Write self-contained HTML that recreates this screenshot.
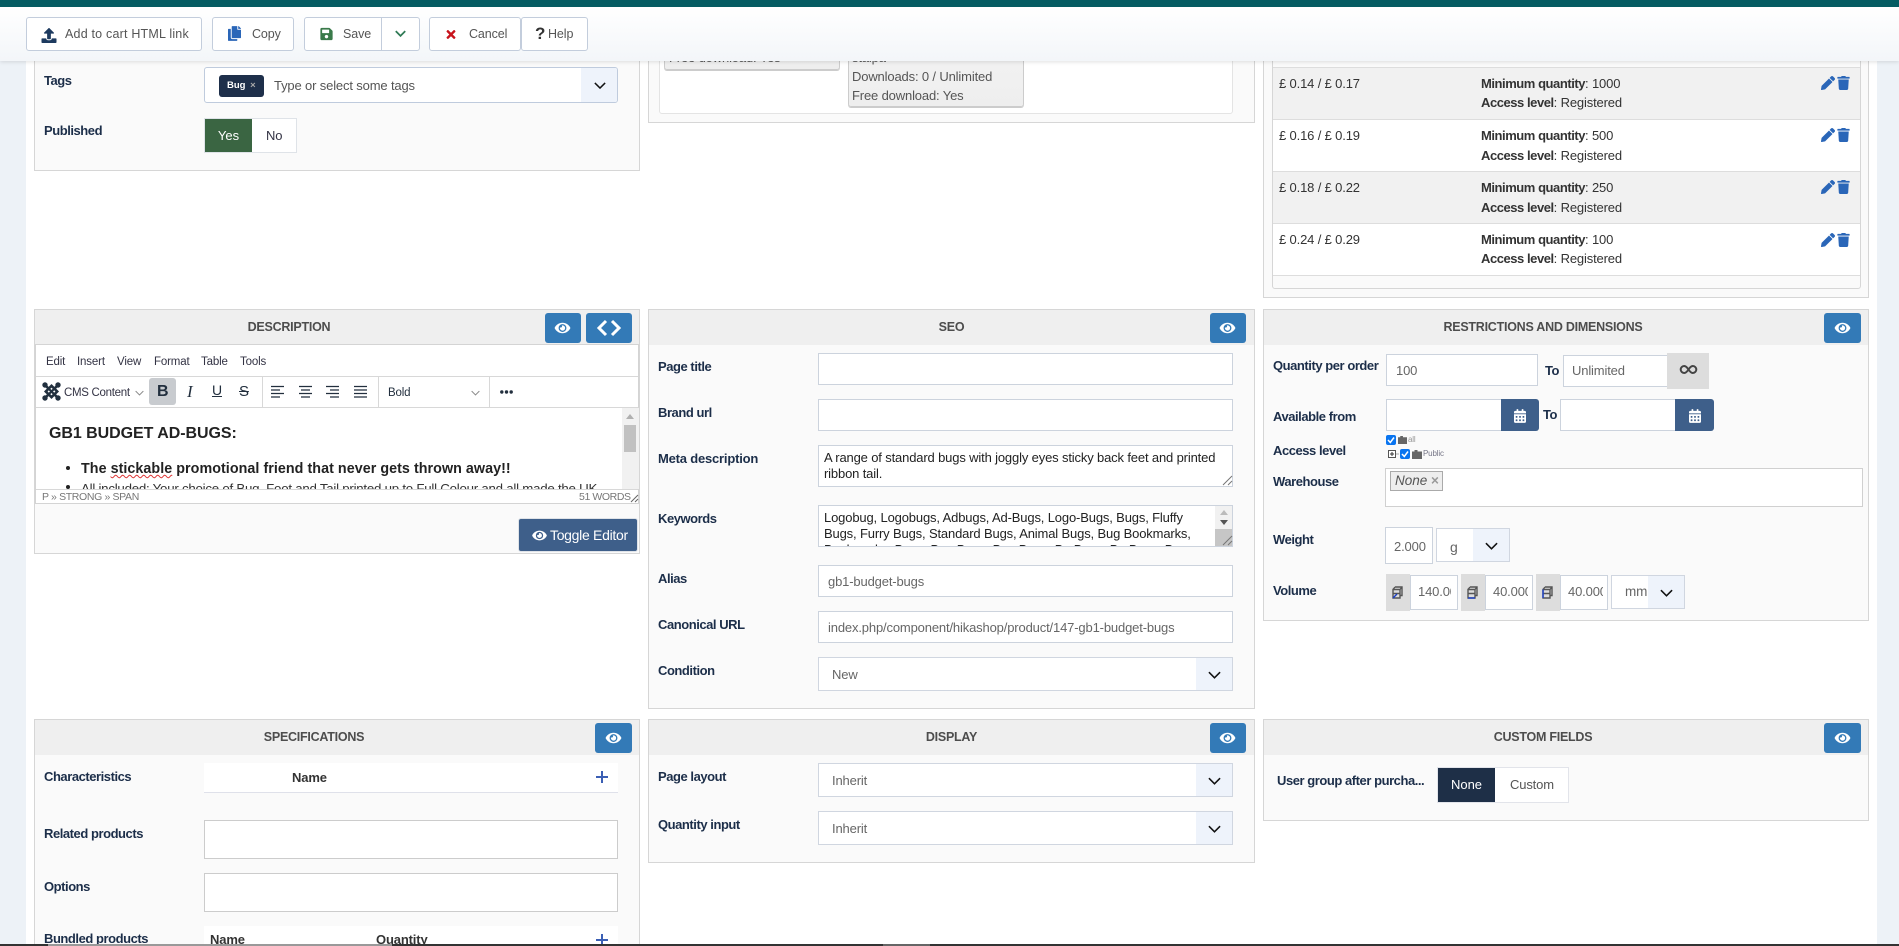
<!DOCTYPE html>
<html lang="en"><head><meta charset="utf-8"><title>Product edit</title>
<style>
html,body{margin:0;padding:0;width:1899px;height:946px;overflow:hidden;background:#fff}
body{position:relative;font-family:"Liberation Sans",Arial,sans-serif;font-size:13px;color:#333}
div,span.a{box-sizing:border-box}
.a,.t,.l,.i,.p,.h,.b,.s,.e{position:absolute}
.t,.l{white-space:nowrap;line-height:20px;height:20px;letter-spacing:-.15px}
.l{font-weight:700;color:#1c2e49;letter-spacing:-.45px}
.t b{letter-spacing:-.45px}
.i{background:#fff;border:1px solid #ccd3dd}
.p{background:#fafafa;border:1px solid #d6d6d6}
.h{background:#efefef;height:35px;text-align:center;font-weight:700;font-size:12.5px;color:#4d4d4d;line-height:34px;left:0;right:0;top:0;letter-spacing:-.25px}
.b{background:#fff;border:1px solid #c3cddc;border-radius:3px;height:34px;top:17px;line-height:32px;color:#555;font-size:12.5px;white-space:nowrap;letter-spacing:-.1px}
.e{background:#337ab7;border-radius:3px;height:30px;width:37px}
.e svg{position:absolute;left:10px;top:8px;width:17px;height:14px;fill:#fff}
.s{background:#fff;border:1px solid #d0d6e0}
.s i{position:absolute;right:0;top:0;bottom:0;background:#eef3fb}
.s svg{position:absolute;fill:none;stroke:#111;stroke-width:1.6}
.g{color:#666}
svg.a{overflow:visible}
.r{left:1px;right:1px;height:52px;border-top:1px solid #ddd}
.tile{background:linear-gradient(#f3f3f3,#eee);border:1px solid #ccc;border-radius:3px;box-shadow:0 1px 0 #ccc}
</style></head><body>
<svg width="0" height="0" style="position:absolute"><defs>
<symbol id="eye" viewBox="0 0 576 512"><path d="M572.52 241.4C518.29 135.59 410.93 64 288 64S57.68 135.64 3.48 241.41a32.35 32.35 0 0 0 0 29.19C57.71 376.41 165.07 448 288 448s230.32-71.64 284.52-177.41a32.35 32.35 0 0 0 0-29.19zM288 400a144 144 0 1 1 144-144 143.93 143.93 0 0 1-144 144zm0-240a95.31 95.31 0 0 0-25.31 3.79 47.85 47.85 0 0 1-66.9 66.9A95.78 95.78 0 1 0 288 160z"/></symbol>
<symbol id="trash" viewBox="0 0 448 512"><path d="M432 32H312l-9.4-18.7A24 24 0 0 0 281.1 0H166.8a23.72 23.72 0 0 0-21.4 13.3L136 32H16A16 16 0 0 0 0 48v32a16 16 0 0 0 16 16h416a16 16 0 0 0 16-16V48a16 16 0 0 0-16-16zM53.2 467a48 48 0 0 0 47.9 45h245.8a48 48 0 0 0 47.9-45L416 128H32z"/></symbol>
<symbol id="pen" viewBox="0 0 512 512"><path d="M497.9 142.1l-46.1 46.1c-4.7 4.7-12.3 4.7-17 0l-111-111c-4.7-4.7-4.7-12.3 0-17l46.1-46.1c18.7-18.7 49.1-18.7 67.9 0l60.1 60.1c18.8 18.7 18.8 49.1 0 67.9zM284.2 99.8L21.6 362.4.4 483.9c-2.9 16.4 11.4 30.6 27.8 27.8l121.5-21.3 262.6-262.6c4.7-4.7 4.7-12.3 0-17l-111-111c-4.8-4.7-12.4-4.7-17.1 0z"/></symbol>
<symbol id="cal" viewBox="0 0 448 512"><path d="M0 464c0 26.5 21.5 48 48 48h352c26.5 0 48-21.5 48-48V192H0v272zm320-196c0-6.6 5.4-12 12-12h40c6.6 0 12 5.4 12 12v40c0 6.6-5.4 12-12 12h-40c-6.6 0-12-5.4-12-12v-40zm0 128c0-6.6 5.4-12 12-12h40c6.6 0 12 5.4 12 12v40c0 6.6-5.4 12-12 12h-40c-6.6 0-12-5.4-12-12v-40zM192 268c0-6.6 5.4-12 12-12h40c6.6 0 12 5.4 12 12v40c0 6.6-5.4 12-12 12h-40c-6.6 0-12-5.4-12-12v-40zm0 128c0-6.6 5.4-12 12-12h40c6.6 0 12 5.4 12 12v40c0 6.6-5.4 12-12 12h-40c-6.6 0-12-5.4-12-12v-40zM64 268c0-6.6 5.4-12 12-12h40c6.6 0 12 5.4 12 12v40c0 6.6-5.4 12-12 12H76c-6.6 0-12-5.4-12-12v-40zm0 128c0-6.6 5.4-12 12-12h40c6.6 0 12 5.4 12 12v40c0 6.6-5.4 12-12 12H76c-6.6 0-12-5.4-12-12v-40zM400 64h-48V16c0-8.8-7.2-16-16-16h-32c-8.8 0-16 7.2-16 16v48H160V16c0-8.8-7.2-16-16-16h-32c-8.8 0-16 7.2-16 16v48H48C21.5 64 0 85.5 0 112v48h448v-48c0-26.5-21.5-48-48-48z"/></symbol>
<symbol id="chev" viewBox="0 0 14 8"><path d="M1 1l6 6 6-6" fill="none" stroke="#111" stroke-width="1.7"/></symbol>
<symbol id="folder" viewBox="0 0 10 9"><path d="M0 1.500h2.500V0h3v1.500H10V9H0z" fill="#666"/></symbol>
<symbol id="cube" viewBox="0 0 11 13"><path d="M1 3.500h7v8.500H1zM3 1h7v8.500H8M1 3.500L3 1M8 3.500L10 1M1 7.500h7" fill="none" stroke="#555" stroke-width="1.400"/></symbol>
</defs></svg>

<!-- page strips -->
<div class="a" style="left:0;top:0;width:26px;height:946px;background:#edf2f7"></div>
<div class="a" style="left:1877px;top:0;width:22px;height:946px;background:#edf2f7"></div>

<!-- Panel: top-left -->
<div class="p" style="left:34px;top:40px;width:606px;height:131px"></div>
<div class="l" style="left:44px;top:71px">Tags</div>
<div class="i" style="left:204px;top:67px;width:414px;height:36px;border-color:#bfcbdd;border-radius:3px;overflow:hidden"><div class="a" style="right:0;top:0;bottom:0;width:36px;background:#eef3fb"></div></div>
<div class="a" style="left:219px;top:75px;width:45px;height:22px;background:#1e2f4a;border-radius:3px;color:#fff;font-size:9.5px;font-weight:700;line-height:22px;padding-left:8px">Bug <span style="color:#aaa;margin-left:2px">×</span></div>
<div class="t" style="left:274px;top:76px;color:#555">Type or select some tags</div>
<svg class="a" style="left:594px;top:82px" width="12" height="7"><use href="#chev" width="12" height="7"/></svg>
<div class="l" style="left:44px;top:121px">Published</div>
<div class="a" style="left:204px;top:118px;width:93px;height:35px;background:#fff;border:1px solid #dfe3e8"></div>
<div class="a" style="left:205px;top:119px;width:47px;height:33px;background:#3a6542;color:#fff;text-align:center;line-height:33px">Yes</div>
<div class="t" style="left:266px;top:126px;color:#334">No</div>

<!-- Panel: top-middle -->
<div class="p" style="left:648px;top:40px;width:607px;height:83px"></div>
<div class="a" style="left:659px;top:40px;width:574px;height:74px;background:#fff;border:1px solid #e4e4e4;border-radius:3px"></div>
<div class="a tile" style="left:664px;top:40px;width:176px;height:30px"></div>
<div class="t" style="left:669px;top:48px;color:#555">Free download: Yes</div>
<div class="a tile" style="left:848px;top:40px;width:176px;height:67px"></div>
<div class="t" style="left:852px;top:48px;color:#555">stalpa</div>
<div class="t" style="left:852px;top:67px;color:#555">Downloads: 0 / Unlimited</div>
<div class="t" style="left:852px;top:86px;color:#555">Free download: Yes</div>

<!-- Panel: top-right prices -->
<div class="p" style="left:1263px;top:40px;width:606px;height:258px"></div>
<div class="a" style="left:1272px;top:40px;width:589px;height:249px;border:1px solid #d6d6d6;border-radius:3px;background:#fafafa"></div>
<div class="a r" style="left:1273px;right:auto;width:587px;top:67px;background:#f1f1f1"></div>
<div class="a r" style="left:1273px;right:auto;width:587px;top:119px;background:#fff"></div>
<div class="a r" style="left:1273px;right:auto;width:587px;top:171px;background:#f1f1f1"></div>
<div class="a r" style="left:1273px;right:auto;width:587px;top:223px;background:#fff;border-bottom:1px solid #ddd;height:53px"></div>

<div class="t" style="left:1279px;top:74px">£ 0.14 / £ 0.17</div>
<div class="t" style="left:1481px;top:74px"><b>Minimum quantity</b>: 1000</div>
<div class="t" style="left:1481px;top:93px"><b>Access level</b>: Registered</div>
<svg class="a" style="left:1821px;top:76px;fill:#2a66b8" width="14" height="14"><use href="#pen" width="14" height="14"/></svg>
<svg class="a" style="left:1837px;top:76px;fill:#2a66b8" width="13" height="14"><use href="#trash" width="13" height="14"/></svg>

<div class="t" style="left:1279px;top:126px">£ 0.16 / £ 0.19</div>
<div class="t" style="left:1481px;top:126px"><b>Minimum quantity</b>: 500</div>
<div class="t" style="left:1481px;top:146px"><b>Access level</b>: Registered</div>
<svg class="a" style="left:1821px;top:128px;fill:#2a66b8" width="14" height="14"><use href="#pen" width="14" height="14"/></svg>
<svg class="a" style="left:1837px;top:128px;fill:#2a66b8" width="13" height="14"><use href="#trash" width="13" height="14"/></svg>

<div class="t" style="left:1279px;top:178px">£ 0.18 / £ 0.22</div>
<div class="t" style="left:1481px;top:178px"><b>Minimum quantity</b>: 250</div>
<div class="t" style="left:1481px;top:198px"><b>Access level</b>: Registered</div>
<svg class="a" style="left:1821px;top:180px;fill:#2a66b8" width="14" height="14"><use href="#pen" width="14" height="14"/></svg>
<svg class="a" style="left:1837px;top:180px;fill:#2a66b8" width="13" height="14"><use href="#trash" width="13" height="14"/></svg>

<div class="t" style="left:1279px;top:230px">£ 0.24 / £ 0.29</div>
<div class="t" style="left:1481px;top:230px"><b>Minimum quantity</b>: 100</div>
<div class="t" style="left:1481px;top:249px"><b>Access level</b>: Registered</div>
<svg class="a" style="left:1821px;top:233px;fill:#2a66b8" width="14" height="14"><use href="#pen" width="14" height="14"/></svg>
<svg class="a" style="left:1837px;top:233px;fill:#2a66b8" width="13" height="14"><use href="#trash" width="13" height="14"/></svg>

<!-- Toolbar -->
<div class="a" style="left:0;top:0;width:1899px;height:7px;background:#055c63;z-index:5"></div>
<div class="a" style="left:0;top:7px;width:1899px;height:54px;background:linear-gradient(#fff,#f3f6f9);box-shadow:0 1px 4px rgba(0,0,0,.12);z-index:4"></div>
<div style="position:absolute;left:0;top:0;z-index:6">
<div class="b" style="left:26px;width:176px;padding-left:38px;letter-spacing:.2px">Add to cart HTML link</div>
<svg class="a" style="left:41px;top:28px;fill:#1d3a5f" width="16" height="15" viewBox="0 0 512 512"><path d="M296 384h-80c-13.3 0-24-10.7-24-24V192h-87.7c-17.8 0-26.7-21.5-14.1-34.1L242.3 5.7c7.5-7.5 19.8-7.5 27.3 0l152.2 152.2c12.6 12.6 3.7 34.1-14.1 34.1H320v168c0 13.3-10.7 24-24 24zm216-8v112c0 13.3-10.7 24-24 24H24c-13.3 0-24-10.7-24-24V376c0-13.3 10.7-24 24-24h136v8c0 30.9 25.1 56 56 56h80c30.9 0 56-25.1 56-56v-8h136c13.3 0 24 10.7 24 24z"/></svg>
<div class="b" style="left:212px;width:82px;padding-left:39px">Copy</div>
<svg class="a" style="left:228px;top:26px;fill:#2a66b8" width="13" height="15" viewBox="0 0 448 512"><path d="M320 448v40c0 13.255-10.745 24-24 24H24c-13.255 0-24-10.745-24-24V120c0-13.255 10.745-24 24-24h72v296c0 30.879 25.121 56 56 56h168zm0-344V0H152c-13.255 0-24 10.745-24 24v368c0 13.255 10.745 24 24 24h272c13.255 0 24-10.745 24-24V128H344c-13.2 0-24-10.8-24-24zm120.971-31.029L375.029 7.029A24 24 0 0 0 358.059 0H352v96h96v-6.059a24 24 0 0 0-7.029-16.97z"/></svg>
<div class="b" style="left:304px;width:78px;padding-left:38px;border-radius:3px 0 0 3px">Save</div>
<div class="b" style="left:381px;width:39px;border-radius:0 3px 3px 0"></div>
<svg class="a" style="left:320px;top:27px;fill:#3a7a4a" width="13" height="14" viewBox="0 0 448 512"><path d="M433.941 129.941l-83.882-83.882A48 48 0 0 0 316.118 32H48C21.49 32 0 53.49 0 80v352c0 26.51 21.49 48 48 48h352c26.51 0 48-21.49 48-48V163.882a48 48 0 0 0-14.059-33.941zM224 416c-35.346 0-64-28.654-64-64 0-35.346 28.654-64 64-64s64 28.654 64 64c0 35.346-28.654 64-64 64zm96-304.52V212c0 6.627-5.373 12-12 12H76c-6.627 0-12-5.373-12-12V108c0-6.627 5.373-12 12-12h228.52c3.183 0 6.235 1.264 8.485 3.515l3.48 3.48A11.996 11.996 0 0 1 320 111.48z"/></svg>
<svg class="a" style="left:395px;top:30px" width="11" height="7" viewBox="0 0 14 8"><path d="M1 1l6 6 6-6" fill="none" stroke="#2f7a55" stroke-width="2.2"/></svg>
<div class="b" style="left:429px;width:92px;padding-left:39px">Cancel</div>
<svg class="a" style="left:446px;top:28px;fill:#c8141c" width="10" height="13" viewBox="0 0 352 512"><path d="M242.72 256l100.07-100.07c12.28-12.28 12.28-32.19 0-44.48l-22.24-22.24c-12.28-12.28-32.19-12.28-44.48 0L176 189.28 75.93 89.21c-12.28-12.28-32.19-12.28-44.48 0L9.21 111.45c-12.28 12.28-12.28 32.19 0 44.48L109.28 256 9.21 356.07c-12.28 12.28-12.28 32.19 0 44.48l22.24 22.24c12.28 12.28 32.2 12.28 44.48 0L176 322.72l100.07 100.07c12.28 12.28 32.2 12.28 44.48 0l22.24-22.24c12.28-12.28 12.28-32.19 0-44.48L242.72 256z"/></svg>
<div class="b" style="left:521px;width:67px;padding-left:26px">Help</div>
<div class="t" style="left:535px;top:24px;font-weight:700;font-size:17px;color:#333">?</div>
</div>

<!-- DESCRIPTION -->
<div class="p" style="left:34px;top:309px;width:606px;height:245px"><div class="h" style="padding-right:96px">DESCRIPTION</div></div>
<div class="e" style="left:545px;top:313px;width:36px"><svg style="left:9px"><use href="#eye" width="17" height="14"/></svg></div>
<div class="e" style="left:586px;top:313px;width:46px"><svg class="a" style="left:11px;top:6px;fill:none;stroke:#fff;stroke-width:3;width:24px;height:18px" viewBox="0 0 24 18"><path d="M9 2L2 9l7 7M15 2l7 7-7 7"/></svg></div>

<div class="a" style="left:35px;top:344px;width:604px;height:160px;background:#fff;border:1px solid #d4d4d4;overflow:hidden">
  <div class="a" style="left:0;top:31px;right:0;height:1px;background:#d8d8d8"></div>
  <div class="a" style="left:0;top:62px;right:0;height:1px;background:#d8d8d8"></div>
  <div class="a" style="left:0;top:144px;right:0;height:1px;background:#d8d8d8"></div>
  <div class="a" style="left:226px;top:32px;width:1px;height:30px;background:#d8d8d8"></div>
  <div class="a" style="left:342px;top:32px;width:1px;height:30px;background:#d8d8d8"></div>
  <div class="a" style="left:453px;top:32px;width:1px;height:30px;background:#d8d8d8"></div>
</div>
<div style="position:absolute;left:0;top:0;font-size:11.5px;color:#334">
<div class="t" style="left:46px;top:352px">Edit</div><div class="t" style="left:77px;top:352px">Insert</div><div class="t" style="left:117px;top:352px">View</div><div class="t" style="left:154px;top:352px">Format</div><div class="t" style="left:201px;top:352px">Table</div><div class="t" style="left:240px;top:352px">Tools</div>
<svg class="a" style="left:42px;top:382px" width="19" height="19" viewBox="0 0 19 19"><g stroke="#22303f" stroke-width="2.6" fill="none"><path d="M3 3l3.500 3.500M16 3l-3.500 3.500M3 16l3.500-3.500M16 16l-3.500-3.500"/><path d="M9.500 3.800l5.700 5.700-5.700 5.700-5.700-5.700z" fill="#fff"/><path d="M6.500 6.500l6 6M12.500 6.500l-6 6" stroke-width="2.200"/></g><g fill="#22303f"><circle cx="3" cy="3" r="2.700"/><circle cx="16" cy="3" r="2.700"/><circle cx="3" cy="16" r="2.700"/><circle cx="16" cy="16" r="2.700"/></g></svg>
<div class="t" style="left:64px;top:383px;font-size:11.5px;letter-spacing:-.3px;color:#334">CMS Content</div>
<svg class="a" style="left:135px;top:390px" width="9" height="6" viewBox="0 0 14 8"><path d="M1 1l6 6 6-6" fill="none" stroke="#888" stroke-width="1.6"/></svg>
<div class="a" style="left:149px;top:378px;width:27px;height:27px;background:#c8cbcf;border-radius:3px"></div>
<div class="t" style="left:157px;top:382px;font-size:16px;font-weight:700;color:#222f3e">B</div>
<div class="t" style="left:187px;top:382px;font-size:17px;font-style:italic;font-family:'Liberation Serif',serif;color:#222f3e">I</div>
<div class="t" style="left:212px;top:380px;font-size:14px;color:#222f3e;text-decoration:underline">U</div>
<div class="t" style="left:239px;top:382px;font-size:15px;color:#222f3e;text-decoration:line-through">S</div>
<svg class="a" style="left:271px;top:385px" width="100" height="14" stroke="#222f3e" stroke-width="1.3"><path d="M0 1.5h13M0 5h9M0 8.5h13M0 12h9"/><path d="M28 1.5h13M30 5h9M28 8.5h13M30 12h9"/><path d="M55 1.5h13M59 5h9M55 8.5h13M59 12h9"/><path d="M83 1.5h13M83 5h13M83 8.5h13M83 12h13"/></svg>
<div class="t" style="left:388px;top:383px;color:#222f3e">Bold</div>
<svg class="a" style="left:471px;top:390px" width="9" height="6" viewBox="0 0 14 8"><path d="M1 1l6 6 6-6" fill="none" stroke="#888" stroke-width="1.6"/></svg>
<svg class="a" style="left:500px;top:390px" width="13" height="4" fill="#222f3e"><circle cx="1.800" cy="2" r="1.700"/><circle cx="6.500" cy="2" r="1.700"/><circle cx="11.200" cy="2" r="1.700"/></svg>
</div>
<!-- editor body -->
<div class="a" style="left:36px;top:408px;width:586px;height:81px;overflow:hidden;background:#fff">
  <div class="t" style="left:13px;top:16px;font-size:16px;font-weight:700;color:#222;letter-spacing:-.05px;line-height:20px">GB1 BUDGET AD-BUGS:</div>
  <div class="a" style="left:30px;top:58px;width:4px;height:4px;border-radius:50%;background:#222"></div>
  <div class="t" style="left:45px;top:51px;font-size:14.3px;font-weight:700;color:#222;letter-spacing:.05px">The <span style="text-decoration:underline wavy #d33 1px">stickable</span> promotional friend that never gets thrown away!!</div>
  <div class="a" style="left:30px;top:77px;width:4px;height:4px;border-radius:50%;background:#222"></div>
  <div class="t" style="left:45px;top:71px;font-size:13.3px;color:#333;letter-spacing:-.25px">All included: Your choice of Bug, Foot and Tail printed up to Full Colour and all made the UK</div>
</div>
<div class="a" style="left:622px;top:408px;width:17px;height:81px;background:#f1f1f1"></div>
<div class="a" style="left:624px;top:425px;width:12px;height:27px;background:#c1c1c1"></div>
<div class="a" style="left:626px;top:414px;width:0;height:0;border:4px solid transparent;border-top:0;border-bottom:5px solid #b0b0b0"></div>
<div class="t" style="left:42px;top:487px;font-size:10.5px;color:#777;letter-spacing:-.35px">P » STRONG » SPAN</div>
<div class="t" style="left:579px;top:487px;font-size:10.5px;color:#777;letter-spacing:-.4px">51 WORDS</div>
<svg class="a" style="left:631px;top:495px" width="7" height="7" stroke="#666"><path d="M0 7L7 0M4 7l3-3"/></svg>
<div class="a" style="left:518px;top:518px;width:120px;height:34px;background:#3e5f8a;border:1px solid #dfe3e8;border-radius:3px;color:#fff;font-size:14px;line-height:32px;padding-left:31px;letter-spacing:-.3px;white-space:nowrap">Toggle Editor</div>
<svg class="a" style="left:532px;top:529px;fill:#fff" width="15" height="13"><use href="#eye" width="15" height="13"/></svg>

<!-- SEO -->
<div class="p" style="left:648px;top:309px;width:607px;height:400px"><div class="h">SEO</div></div>
<div class="e" style="left:1210px;top:313px;width:36px"><svg style="left:9px"><use href="#eye" width="17" height="14"/></svg></div>
<div class="l" style="left:658px;top:357px">Page title</div>
<div class="i" style="left:818px;top:353px;width:415px;height:32px"></div>
<div class="l" style="left:658px;top:403px">Brand url</div>
<div class="i" style="left:818px;top:399px;width:415px;height:32px"></div>
<div class="l" style="left:658px;top:449px;letter-spacing:-.2px">Meta description</div>
<div class="i" style="left:818px;top:445px;width:415px;height:42px"></div>
<div class="t" style="left:824px;top:448px;color:#222">A range of standard bugs with joggly eyes sticky back feet and printed</div>
<div class="t" style="left:824px;top:464px;color:#222">ribbon tail.</div>
<svg class="a" style="left:1223px;top:476px" width="9" height="9" stroke="#777"><path d="M0 9L9 0M5 9l4-4"/></svg>
<div class="l" style="left:658px;top:509px">Keywords</div>
<div class="a" style="left:818px;top:505px;width:415px;height:42px;background:#fff;border:1px solid #ccd3dd;overflow:hidden;color:#222;line-height:16px;padding:4px 18px 0 5px;letter-spacing:-.15px">Logobug, Logobugs, Adbugs, Ad-Bugs, Logo-Bugs, Bugs, Fluffy<br>Bugs, Furry Bugs, Standard Bugs, Animal Bugs, Bug Bookmarks,<br>Bookmarks, Bugs, Bug Bugs, Bug Bugs, Bg Bugs, Bg Bugs, B</div>
<div class="a" style="left:1215px;top:506px;width:17px;height:40px;background:#f1f1f1"></div>
<div class="a" style="left:1215px;top:529px;width:17px;height:17px;background:#c6c6c6"></div>
<div class="a" style="left:1220px;top:510px;border:4px solid transparent;border-top:0;border-bottom:5px solid #bbb;width:0;height:0"></div>
<div class="a" style="left:1220px;top:520px;border:4px solid transparent;border-bottom:0;border-top:5px solid #555;width:0;height:0"></div>
<svg class="a" style="left:1223px;top:536px" width="9" height="9" stroke="#777"><path d="M0 9L9 0M5 9l4-4"/></svg>
<div class="l" style="left:658px;top:569px">Alias</div>
<div class="i" style="left:818px;top:565px;width:415px;height:32px"></div>
<div class="t g" style="left:828px;top:572px">gb1-budget-bugs</div>
<div class="l" style="left:658px;top:615px">Canonical URL</div>
<div class="i" style="left:818px;top:611px;width:415px;height:32px"></div>
<div class="t g" style="left:828px;top:618px">index.php/component/hikashop/product/147-gb1-budget-bugs</div>
<div class="l" style="left:658px;top:661px">Condition</div>
<div class="s" style="left:818px;top:657px;width:415px;height:34px"><i style="width:36px"></i><svg style="right:11px;top:13px" width="13" height="8"><use href="#chev" width="13" height="8"/></svg></div>
<div class="t g" style="left:832px;top:665px">New</div>

<!-- RESTRICTIONS -->
<div class="p" style="left:1263px;top:309px;width:606px;height:312px"><div class="h" style="padding-right:46px;padding-left:0">RESTRICTIONS AND DIMENSIONS</div></div>
<div class="e" style="left:1824px;top:313px"><svg><use href="#eye" width="17" height="14"/></svg></div>
<div class="l" style="left:1273px;top:356px">Quantity per order</div>
<div class="i" style="left:1386px;top:354px;width:152px;height:32px"></div>
<div class="t g" style="left:1396px;top:361px">100</div>
<div class="l" style="left:1545px;top:361px">To</div>
<div class="i" style="left:1563px;top:355px;width:105px;height:32px"></div>
<div class="t g" style="left:1572px;top:361px">Unlimited</div>
<div class="a" style="left:1667px;top:353px;width:42px;height:36px;background:#ddd"></div>
<svg class="a" style="left:1680px;top:365px" width="17" height="9" viewBox="0 0 17 9" fill="none" stroke="#444" stroke-width="2"><path d="M8.5 4.5C7 2.2 5.800 1 4.200 1a3.500 3.500 0 0 0 0 7c1.600 0 2.800-1.200 4.300-3.500zm0 0C10 6.800 11.200 8 12.800 8a3.500 3.500 0 0 0 0-7C11.200 1 10 2.200 8.500 4.500z"/></svg>
<div class="l" style="left:1273px;top:407px">Available from</div>
<div class="i" style="left:1386px;top:399px;width:116px;height:32px"></div>
<div class="a" style="left:1501px;top:399px;width:38px;height:32px;background:#3e5f8a;border-radius:0 3px 3px 0"></div>
<svg class="a" style="left:1514px;top:409px;fill:#fff" width="12" height="14"><use href="#cal" width="12" height="14"/></svg>
<div class="l" style="left:1543px;top:405px">To</div>
<div class="i" style="left:1560px;top:399px;width:116px;height:32px"></div>
<div class="a" style="left:1675px;top:399px;width:39px;height:32px;background:#3e5f8a;border-radius:0 3px 3px 0"></div>
<svg class="a" style="left:1689px;top:409px;fill:#fff" width="12" height="14"><use href="#cal" width="12" height="14"/></svg>
<div class="l" style="left:1273px;top:441px">Access level</div>
<svg class="a" style="left:1386px;top:435px" width="10" height="10"><rect width="10" height="10" rx="2" fill="#0a75f0"/><path d="M2 5l2.300 2.500L8 2.500" fill="none" stroke="#fff" stroke-width="1.500"/></svg>
<svg class="a" style="left:1398px;top:435px" width="9" height="10"><use href="#folder" width="9" height="10"/></svg>
<div class="t" style="left:1408px;top:430px;font-size:8px;color:#999">all</div>
<svg class="a" style="left:1388px;top:449px" width="12" height="10"><rect x=".5" y="1.500" width="7" height="7" fill="#fff" stroke="#555"/><path d="M2 5h4M4 3v4" stroke="#333"/><path d="M8 5h3" stroke="#aaa"/></svg>
<svg class="a" style="left:1400px;top:449px" width="10" height="10"><rect width="10" height="10" rx="2" fill="#0a75f0"/><path d="M2 5l2.300 2.500L8 2.500" fill="none" stroke="#fff" stroke-width="1.500"/></svg>
<svg class="a" style="left:1412px;top:450px" width="10" height="9"><use href="#folder" width="10" height="9"/></svg>
<div class="t" style="left:1423px;top:444px;font-size:8px;color:#778">Public</div>
<div class="l" style="left:1273px;top:472px">Warehouse</div>
<div class="a" style="left:1385px;top:468px;width:478px;height:39px;background:#fff;border:1px solid #d0d0d0"></div>
<div class="a" style="left:1390px;top:471px;width:53px;height:20px;background:#eee;border:1px solid #aaa;font-style:italic;color:#555;font-size:13.5px;line-height:18px;padding-left:4px;white-space:nowrap">None <span style="font-style:normal;color:#999;font-weight:700">×</span></div>
<div class="l" style="left:1273px;top:530px">Weight</div>
<div class="i" style="left:1385px;top:527px;width:48px;height:37px"></div>
<div class="t g" style="left:1394px;top:537px">2.000</div>
<div class="s" style="left:1436px;top:528px;width:74px;height:34px"><i style="width:36px"></i><svg style="right:11px;top:13px" width="13" height="8"><use href="#chev" width="13" height="8"/></svg></div>
<div class="t g" style="left:1450px;top:537px;font-size:14px">g</div>
<div class="l" style="left:1273px;top:581px">Volume</div>
<div class="a" style="left:1386px;top:574px;width:24px;height:37px;background:#ddd"></div>
<div class="a" style="left:1461px;top:574px;width:24px;height:37px;background:#ddd"></div>
<div class="a" style="left:1536px;top:574px;width:24px;height:37px;background:#ddd"></div>
<svg class="a" style="left:1392px;top:586px" width="11" height="13"><use href="#cube" width="11" height="13"/><path d="M1 12l4-4" stroke="#1a3fc8" stroke-width="1.400"/></svg>
<svg class="a" style="left:1467px;top:586px" width="11" height="13"><use href="#cube" width="11" height="13"/><path d="M1 12h7" stroke="#1a3fc8" stroke-width="1.400"/></svg>
<svg class="a" style="left:1542px;top:586px" width="11" height="13"><use href="#cube" width="11" height="13"/><path d="M1 3.500V12" stroke="#1a3fc8" stroke-width="1.400"/></svg>
<div class="i" style="left:1410px;top:575px;width:48px;height:35px;overflow:hidden"><div class="t g" style="left:7px;top:6px;width:33px;overflow:hidden">140.000</div></div>
<div class="i" style="left:1485px;top:575px;width:48px;height:35px;overflow:hidden"><div class="t g" style="left:7px;top:6px;width:35px;overflow:hidden">40.000</div></div>
<div class="i" style="left:1560px;top:575px;width:48px;height:35px;overflow:hidden"><div class="t g" style="left:7px;top:6px;width:35px;overflow:hidden">40.000</div></div>
<div class="s" style="left:1611px;top:575px;width:74px;height:34px"><i style="width:36px"></i><svg style="right:11px;top:13px" width="13" height="8"><use href="#chev" width="13" height="8"/></svg></div>
<div class="t g" style="left:1625px;top:582px;font-size:13.5px">mm</div>

<!-- SPECIFICATIONS -->
<div class="p" style="left:34px;top:719px;width:606px;height:240px"><div class="h" style="padding-right:46px;padding-left:0">SPECIFICATIONS</div></div>
<div class="e" style="left:595px;top:723px"><svg><use href="#eye" width="17" height="14"/></svg></div>
<div class="l" style="left:44px;top:767px">Characteristics</div>
<div class="a" style="left:204px;top:763px;width:414px;height:30px;background:#fff;border-bottom:1px solid #dfe1ea"></div>
<div class="t" style="left:292px;top:768px;font-weight:700;color:#333">Name</div>
<svg class="a" style="left:596px;top:771px" width="12" height="12" stroke="#3b5fb4" stroke-width="2"><path d="M0 6h12M6 0v12"/></svg>
<div class="l" style="left:44px;top:824px">Related products</div>
<div class="a" style="left:204px;top:820px;width:414px;height:39px;background:#fff;border:1px solid #ccc"></div>
<div class="l" style="left:44px;top:877px">Options</div>
<div class="a" style="left:204px;top:873px;width:414px;height:39px;background:#fff;border:1px solid #ccc"></div>
<div class="l" style="left:44px;top:929px">Bundled products</div>
<div class="a" style="left:204px;top:926px;width:414px;height:20px;background:#fff"></div>
<div class="t" style="left:210px;top:930px;font-weight:700;color:#333">Name</div>
<div class="t" style="left:376px;top:930px;font-weight:700;color:#333">Quantity</div>
<svg class="a" style="left:596px;top:934px" width="12" height="12" stroke="#3b5fb4" stroke-width="2"><path d="M0 6h12M6 0v12"/></svg>

<!-- DISPLAY -->
<div class="p" style="left:648px;top:719px;width:607px;height:144px"><div class="h">DISPLAY</div></div>
<div class="e" style="left:1210px;top:723px;width:36px"><svg style="left:9px"><use href="#eye" width="17" height="14"/></svg></div>
<div class="l" style="left:658px;top:767px">Page layout</div>
<div class="s" style="left:818px;top:763px;width:415px;height:34px"><i style="width:36px"></i><svg style="right:11px;top:13px" width="13" height="8"><use href="#chev" width="13" height="8"/></svg></div>
<div class="t g" style="left:832px;top:771px">Inherit</div>
<div class="l" style="left:658px;top:815px">Quantity input</div>
<div class="s" style="left:818px;top:811px;width:415px;height:34px"><i style="width:36px"></i><svg style="right:11px;top:13px" width="13" height="8"><use href="#chev" width="13" height="8"/></svg></div>
<div class="t g" style="left:832px;top:819px">Inherit</div>

<!-- CUSTOM FIELDS -->
<div class="p" style="left:1263px;top:719px;width:606px;height:102px"><div class="h" style="padding-right:46px;padding-left:0">CUSTOM FIELDS</div></div>
<div class="e" style="left:1824px;top:723px"><svg><use href="#eye" width="17" height="14"/></svg></div>
<div class="l" style="left:1277px;top:771px">User group after purcha...</div>
<div class="a" style="left:1437px;top:767px;width:132px;height:36px;background:#fff;border:1px solid #e2e4ea"></div>
<div class="a" style="left:1438px;top:768px;width:57px;height:34px;background:#1e2f47;color:#fff;text-align:center;line-height:34px">None</div>
<div class="t" style="left:1510px;top:775px;color:#555">Custom</div>

<!-- bottom strip -->
<div class="a" style="left:0;top:944px;width:1899px;height:2px;background:#333;z-index:9"></div>
<div class="a" style="left:48px;top:944px;width:344px;height:2px;background:#999;z-index:9"></div>
<div class="a" style="left:883px;top:944px;width:47px;height:2px;background:#666;z-index:9"></div>
</body></html>
